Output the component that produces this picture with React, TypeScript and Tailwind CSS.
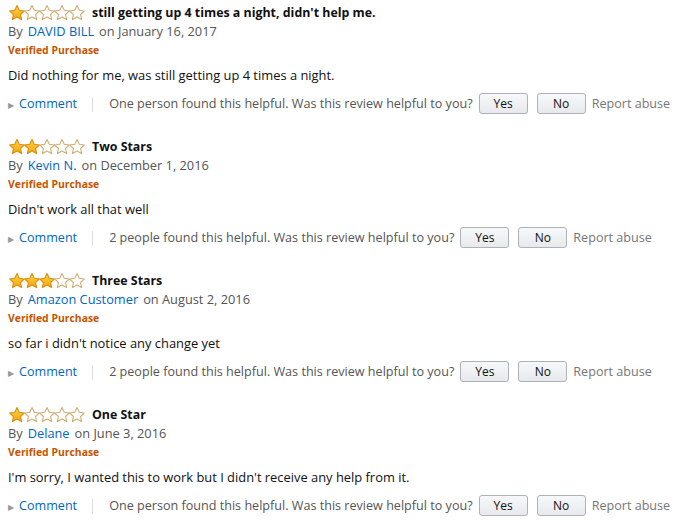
import React from 'react'

const font = { fontFamily: '"Open Sans", "Liberation Sans", sans-serif' }

type Review = {
  stars: number
  title: string
  author: string
  date: string
  body: string
  helpful: string
}

const reviews: Review[] = [
  {
    stars: 1,
    title: "still getting up 4 times a night, didn't help me.",
    author: 'DAVID BILL',
    date: 'January 16, 2017',
    body: 'Did nothing for me, was still getting up 4 times a night.',
    helpful: 'One person found this helpful.',
  },
  {
    stars: 2,
    title: 'Two Stars',
    author: 'Kevin N.',
    date: 'December 1, 2016',
    body: "Didn't work all that well",
    helpful: '2 people found this helpful.',
  },
  {
    stars: 3,
    title: 'Three Stars',
    author: 'Amazon Customer',
    date: 'August 2, 2016',
    body: "so far i didn't notice any change yet",
    helpful: '2 people found this helpful.',
  },
  {
    stars: 1,
    title: 'One Star',
    author: 'Delane',
    date: 'June 3, 2016',
    body: "I'm sorry, I wanted this to work but I didn't receive any help from it.",
    helpful: 'One person found this helpful.',
  },
]

// five point star filling most of a 16x16 box
const STAR = 'M8 0.6l2.25 4.7 5.15.63-3.8 3.56.97 5.1L8 12.1l-4.57 2.5.97-5.1L.6 5.93l5.15-.63z'

function Star({ filled }: { filled: boolean }) {
  return (
    <svg width="16" height="16" viewBox="0 0 16 16" className="shrink-0 -mr-[1px]">
      <defs>
        <linearGradient id="gold" x1="0" y1="0" x2="0" y2="1">
          <stop offset="0" stopColor="#ffd24a" />
          <stop offset="1" stopColor="#f2a60f" />
        </linearGradient>
      </defs>
      <path
        d={STAR}
        fill={filled ? 'url(#gold)' : '#ffffff'}
        stroke={filled ? '#dc8e0c' : '#cfae72'}
        strokeWidth="1.1"
        strokeLinejoin="round"
      />
    </svg>
  )
}

function ReviewBlock({ r }: { r: Review }) {
  return (
    <div className="flex flex-col pb-[23px]">
      <div className="flex items-center h-[19px] pt-[1px]">
        <div className="flex items-center w-[84px] pl-[1px]">
          {[0, 1, 2, 3, 4].map((i) => (
            <Star key={i} filled={i < r.stars} />
          ))}
        </div>
        <span className="text-[12.4px] font-bold text-[#111] whitespace-nowrap">{r.title}</span>
      </div>
      <div className="flex items-center h-[19px] text-[12.8px] text-[#555] whitespace-nowrap">
        <span>By</span>
        <span className="ml-[5px] text-[#0066c0]">{r.author}</span>
        <span className="ml-[5px]">on {r.date}</span>
      </div>
      <div className="flex items-center h-[19px] text-[10.4px] font-bold text-[#c45500]">
        Verified Purchase
      </div>
      <div className="flex items-center h-[19px] mt-[6px] text-[12.9px] text-[#111] whitespace-nowrap">
        {r.body}
      </div>
      <div className="flex items-center h-[21px] mt-[8px] text-[12.6px] whitespace-nowrap">
        <span className="text-[#999] text-[8px] mr-[5px] translate-y-[1px]">▶</span>
        <span className="text-[#0066c0] translate-y-[1px]">Comment</span>
        <span className="w-px h-[15px] bg-[#ddd] ml-[15px] mr-[16px] translate-y-[1px]" />
        <span className="text-[#555] translate-y-[1px]">
          {r.helpful} Was this review helpful to you?
        </span>
        <button className="ml-[6px] w-[49px] h-[21px] rounded-[3px] border border-[#adb1b8] bg-gradient-to-b from-[#f7f8fa] to-[#e7e9ec] text-[12px] text-[#111]">
          Yes
        </button>
        <button className="ml-[9px] w-[49px] h-[21px] rounded-[3px] border border-[#adb1b8] bg-gradient-to-b from-[#f7f8fa] to-[#e7e9ec] text-[12px] text-[#111]">
          No
        </button>
        <span className="ml-[6px] text-[#767676] translate-y-[1px]">Report abuse</span>
      </div>
    </div>
  )
}

export default function App() {
  return (
    <div style={font} className="bg-white w-[684px] h-[527px] overflow-hidden pl-[8px] pt-[3px]">
      {reviews.map((r, i) => (
        <ReviewBlock key={i} r={r} />
      ))}
    </div>
  )
}
